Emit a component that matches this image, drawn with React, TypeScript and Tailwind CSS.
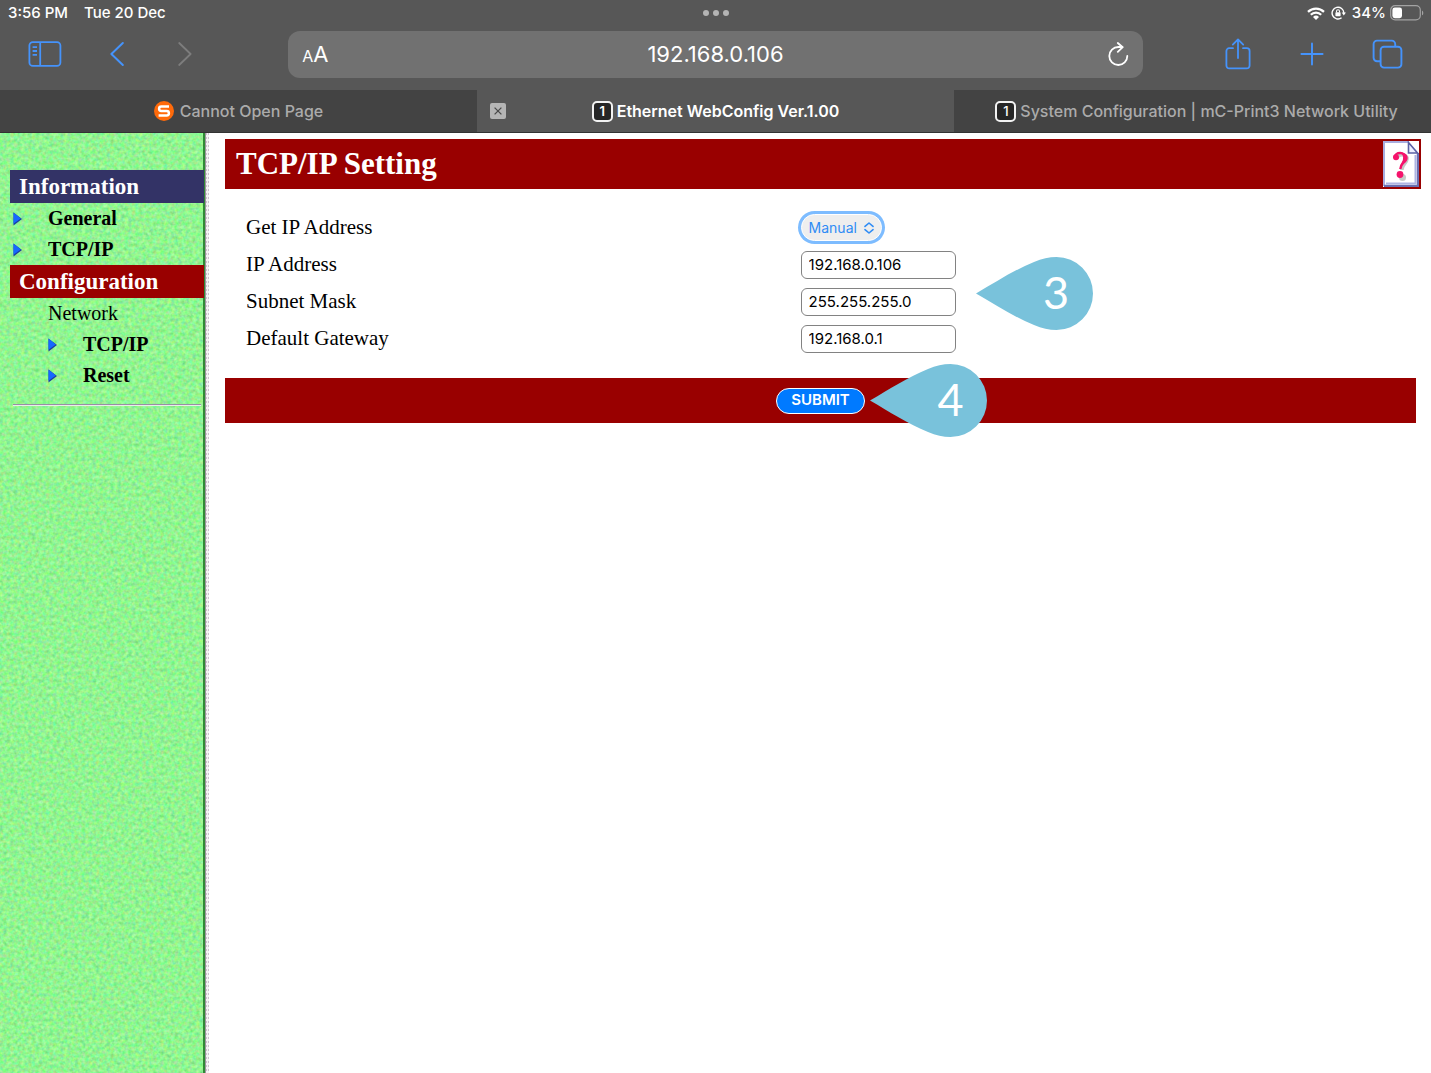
import type { ReactNode } from 'react';

function StatusBar() {
  return (
    <div className="relative flex h-[27px] items-center justify-between pl-2 pr-[7px] text-[15px] font-medium text-white">
      <div className="flex gap-4">
        <span>3:56 PM</span>
        <span>Tue 20 Dec</span>
      </div>
      <div className="absolute inset-x-0 top-2.5 flex justify-center gap-1">
        <span className="size-1.5 rounded-full bg-[#b4b4b4]" />
        <span className="size-1.5 rounded-full bg-[#b4b4b4]" />
        <span className="size-1.5 rounded-full bg-[#b4b4b4]" />
      </div>
      <div className="flex items-center pb-px">
        <svg className="mr-1.5" width="18" height="13" viewBox="0 0 18 13" fill="none" stroke="#fff" strokeWidth="2.2">
          <path d="M1 4.9a11.3 11.3 0 0 1 16 0" />
          <path d="M3.8 7.8a7.3 7.3 0 0 1 10.4 0" />
          <path d="M6 9.9a4.3 4.3 0 0 1 6 0L9 13z" fill="#fff" stroke="none" />
        </svg>
        <svg className="mr-1.5" width="15" height="14" viewBox="0 0 15 14" fill="none" stroke="#fff" strokeWidth="1.4">
          <path d="M10.6 11.8A5.9 5.9 0 1 1 12.9 7" />
          <path d="M10.7 6.4h4.2l-2.1 3z" fill="#fff" stroke="none" />
          <rect x="4.4" y="6.2" width="5.2" height="4" rx=".7" fill="#fff" stroke="none" />
          <path d="M5.5 6.4V5.2a1.5 1.5 0 0 1 3 0v1.2" strokeWidth="1.1" />
        </svg>
        <span className="mr-1">34%</span>
        <svg width="34" height="16" viewBox="0 0 34 16" fill="none">
          <rect x=".7" y=".7" width="29.6" height="14.2" rx="4.4" stroke="#a3a3a3" strokeWidth="1.2" />
          <rect x="2.4" y="2.6" width="9.6" height="10.6" rx="2.4" fill="#fff" />
          <path d="M32 5.4c1.7.7 1.7 4.2 0 4.9z" fill="#a3a3a3" />
        </svg>
      </div>
    </div>
  );
}

function Toolbar() {
  return (
    <div className="grid h-[63px] grid-cols-[1fr_3fr_1fr] pb-2 text-[#4593fb]">
      <div className="flex items-center pb-px pl-7">
        <button aria-label="Show sidebar" className="mr-12">
          <svg width="34" height="26" viewBox="0 0 34 26" fill="none" stroke="currentColor" strokeWidth="1.8">
            <rect x="1.4" y="1.2" width="31" height="23.6" rx="3.4" />
            <path d="M12.2 1.2v23.6M4.6 6.2H9M4.6 10H9M4.6 13.8H9" />
          </svg>
        </button>
        <button aria-label="Back" className="mr-[54px]">
          <svg width="14" height="26" viewBox="0 0 14 26" fill="none" stroke="currentColor" strokeWidth="2" strokeLinecap="round" strokeLinejoin="round">
            <path d="M12.8 2 1.4 13l11.4 11" />
          </svg>
        </button>
        <button aria-label="Forward" className="text-[#7d7d7d]">
          <svg width="14" height="26" viewBox="0 0 14 26" fill="none" stroke="currentColor" strokeWidth="1.8" strokeLinecap="round" strokeLinejoin="round">
            <path d="m1.2 2 11.4 11L1.2 24" />
          </svg>
        </button>
      </div>
      <div className="mx-0.5 my-1 flex items-center justify-between rounded-xl bg-[#717171] px-3.5 text-white">
        <button aria-label="Page settings" className="flex w-8 items-baseline pt-0.5">
          <span className="text-[16px]">A</span>
          <span className="text-[22px] leading-none">A</span>
        </button>
        <span className="text-[22px]">192.168.0.106</span>
        <button aria-label="Reload" className="flex w-8 justify-end">
          <svg width="21" height="25" viewBox="0 0 21 25" fill="none" stroke="currentColor" strokeWidth="1.8" strokeLinecap="round" strokeLinejoin="round">
            <path d="M19.3 14a9 9 0 1 1-9-9h4" />
            <path d="m9.8 1 4.900 4.200-4.900 4.600" />
          </svg>
        </button>
      </div>
      <div className="flex items-center justify-end pb-0.5 pr-7">
        <button aria-label="Share" className="mr-12">
          <svg width="27" height="32" viewBox="0 0 27 32" fill="none" stroke="currentColor" strokeWidth="1.8" strokeLinecap="round" strokeLinejoin="round">
            <path d="M8 10.2H4.2A2.8 2.8 0 0 0 1.4 13v14.6a2.8 2.8 0 0 0 2.8 2.8h17.6a2.8 2.8 0 0 0 2.8-2.8V13a2.8 2.8 0 0 0-2.8-2.8H18" />
            <path d="M13 20V1.6M7.8 6.6 13 1.4l5.2 5.2" />
          </svg>
        </button>
        <button aria-label="New tab" className="mr-12">
          <svg width="24" height="24" viewBox="0 0 24 24" fill="none" stroke="currentColor" strokeWidth="1.9" strokeLinecap="round">
            <path d="M12 1.4v21.2M1.4 12h21.2" />
          </svg>
        </button>
        <button aria-label="Show tabs">
          <svg width="31" height="30" viewBox="0 0 31 30" fill="none" stroke="currentColor" strokeWidth="1.9">
            <path d="M8.6 22.2H5A3.4 3.4 0 0 1 1.6 18.8V5A3.4 3.4 0 0 1 5 1.6h14.8A3.4 3.4 0 0 1 23.2 5v2.8" />
            <rect x="8.6" y="7.8" width="20.8" height="20.8" rx="3.4" />
          </svg>
        </button>
      </div>
    </div>
  );
}

function OneBadge() {
  return (
    <span className="flex size-[21px] items-center justify-center rounded-[5px] border-2 border-[#f2f2f2] bg-[#262626] text-[13px] leading-none text-white">
      1
    </span>
  );
}

function Tabs() {
  return (
    <div className="grid h-[43px] grid-cols-3 border-b border-[#333] bg-[#434343] text-[16px] font-medium text-[#ababab]">
      <button className="flex items-center justify-center gap-1.5">
        <svg width="20" height="20" viewBox="0 0 20 20">
          <circle cx="10" cy="10" r="10" fill="#ff6a0a" />
          <path d="M15 5.6H7.3a2.2 2.2 0 0 0 0 4.4h5.4a2.2 2.2 0 0 1 0 4.4H4.6" fill="none" stroke="#fff" strokeWidth="2.5" />
        </svg>
        Cannot Open Page
      </button>
      <div className="relative flex items-center justify-center bg-[#575757] text-white">
        <button aria-label="Close tab" className="absolute left-[13px] flex size-4 items-center justify-center rounded-[2px] bg-[#b5b5b5] text-[#4a4a4a]">
          <svg width="8" height="8" viewBox="0 0 8 8" stroke="currentColor" strokeWidth="1.3">
            <path d="m.6.6 6.8 6.8M7.4.6.6 7.4" />
          </svg>
        </button>
        <button className="flex items-center gap-1 font-semibold">
          <OneBadge />
          Ethernet WebConfig Ver.1.00
        </button>
      </div>
      <button className="flex items-center justify-center gap-1 whitespace-nowrap pl-2">
        <OneBadge />
        System Configuration | mC-Print3 Network Utility
      </button>
    </div>
  );
}

function Arrow() {
  return (
    <svg width="9" height="14" viewBox="0 0 9 14">
      <path d="M.5.5 9 7 .5 13.5z" fill="#1c3d9c" />
      <path d="M.5.5 7.8 6.4.5 11.8z" fill="#1668ff" />
    </svg>
  );
}

function NavLink({ children, nested }: { children: ReactNode; nested?: boolean }) {
  return (
    <a href="#" className={nested ? 'flex h-[31px] items-center pl-12 font-bold' : 'flex h-[31px] items-center pl-[13px] font-bold'}>
      <span className="w-[35px]">
        <Arrow />
      </span>
      {children}
    </a>
  );
}

function Sidebar() {
  return (
    <nav className="relative w-[209px] shrink-0 pr-1 pt-[37px] text-[20px] leading-[31px] text-black">
      <svg className="absolute inset-0 h-full w-full" aria-hidden="true">
        <defs>
          <filter id="paper" x="0" y="0" width="100%" height="100%" colorInterpolationFilters="sRGB">
            <feTurbulence type="fractalNoise" baseFrequency="0.28" numOctaves="2" seed="4" />
            <feColorMatrix values="0.42 0 0 0 0.36  0 0.3 0 0 0.81  0 0 0.34 0 0.4  0 0 0 0 1" />
          </filter>
          <pattern id="dots" width="4" height="4" patternUnits="userSpaceOnUse">
            <rect width="4" height="4" fill="#f4f2f4" />
            <rect width="3" height="2" fill="#cdc4cd" />
          </pattern>
        </defs>
        <rect width="204" height="100%" fill="#92f992" />
        <rect width="204" height="100%" filter="url(#paper)" />
        <rect x="203" width="2" height="100%" fill="#2f8a35" />
        <rect x="205" width="1" height="100%" fill="#9a949a" />
        <rect x="206" width="3" height="100%" fill="url(#dots)" />
      </svg>
      <div className="relative">
        <h2 className="ml-2.5 mr-px h-[33px] bg-[#333366] pl-[9px] text-[23px] leading-[34px] font-bold text-white">Information</h2>
        <NavLink>General</NavLink>
        <NavLink>TCP/IP</NavLink>
        <h2 className="ml-2.5 mr-px h-[33px] bg-[#990000] pl-[9px] text-[23px] leading-[34px] font-bold text-white">Configuration</h2>
        <div className="pl-12">Network</div>
        <NavLink nested>TCP/IP</NavLink>
        <NavLink nested>Reset</NavLink>
        <hr className="ml-[13px] mr-1 mt-[13px] h-0.5 border-0 border-t border-b border-t-[#9a8fa5] border-b-[#e9eee9]" />
      </div>
    </nav>
  );
}

function Callout({ label }: { label: string }) {
  return (
    <div className="relative h-[73px] w-[117px]">
      <svg className="absolute inset-0" width="117" height="73" viewBox="0 0 117 73">
        <path d="M0 36.5C20 25 38 13 58 5 66 1.5 73 0 80.500 0a36.500 36.500 0 0 1 0 73C73 73 66 71.500 58 68 38 60 20 48 0 36.500z" fill="#79c2db" />
      </svg>
      <span className="relative flex h-full items-center justify-center pb-0.5 pl-11 font-['Lato',sans-serif] text-[45px] leading-none text-white">
        {label}
      </span>
    </div>
  );
}

const fields = [
  { id: 'ip', label: 'IP Address', value: '192.168.0.106' },
  { id: 'mask', label: 'Subnet Mask', value: '255.255.255.0' },
  { id: 'gateway', label: 'Default Gateway', value: '192.168.0.1' },
];

function SettingsForm() {
  return (
    <form className="mr-[5px]" onSubmit={(e) => e.preventDefault()}>
      <div className="grid grid-cols-[474fr_526fr] auto-rows-[37px] items-center pb-[21px] pl-[21px] pt-5 text-[21px]">
        <label htmlFor="mode">Get IP Address</label>
        <div className="relative flex w-fit items-center font-['Inter',sans-serif] text-[14px] text-[#2f8cf5]">
          <select id="mode" defaultValue="Manual" className="h-[27px] w-[81px] appearance-none rounded-full border border-white bg-[#eeeeee] pl-[7px] ring-3 ring-[#7dbcff] outline-none">
            <option>Manual</option>
            <option>DHCP</option>
          </select>
          <svg className="pointer-events-none absolute right-2" width="10" height="12" viewBox="0 0 10 12" fill="none" stroke="currentColor" strokeWidth="1.6" strokeLinecap="round" strokeLinejoin="round">
            <path d="M1 4.4 5 1l4 3.4M1 7.6 5 11l4-3.4" />
          </svg>
        </div>
        {fields.map((f) => (
          <div key={f.id} className="col-span-2 grid grid-cols-subgrid items-center">
            <label htmlFor={f.id}>{f.label}</label>
            <div className="relative flex w-fit items-center">
              <input
                id={f.id}
                defaultValue={f.value}
                className="h-7 w-[155px] rounded-md border border-[#828282] bg-white px-[7px] font-['Inter',sans-serif] text-[15px] text-black outline-none"
              />
              {f.id === 'mask' && (
                <div className="absolute bottom-[-14px] left-full pl-5">
                  <Callout label="3" />
                </div>
              )}
            </div>
          </div>
        ))}
      </div>
      <div className="flex h-[45px] items-center justify-center bg-[#990000]">
        <div className="relative flex items-center">
          <button type="submit" className="h-[26px] w-[89px] rounded-full border border-white bg-[#007aff] font-['Inter',sans-serif] text-[15px] font-semibold text-white">
            SUBMIT
          </button>
          <div className="absolute left-full pl-[5px]">
            <Callout label="4" />
          </div>
        </div>
      </div>
    </form>
  );
}

function HelpIcon() {
  return (
    <svg width="36" height="46" viewBox="0 0 36 46">
      <path d="M0 0h36v46H0z" fill="#fff" />
      <path d="M1 45V1h25" fill="none" stroke="#a9addf" strokeWidth="2" />
      <path d="M1 45h34V12" fill="none" stroke="#6a6fb0" strokeWidth="2.4" />
      <path d="M3 42.5h29.500V14" fill="none" stroke="#aeb3e2" strokeWidth="2" />
      <path d="M25.500 1.500v10.500h9z" fill="#eef0ff" stroke="#5b60a4" strokeWidth="1.600" />
      <path d="M14 18c0-6 10.500-5.500 10 0-.3 4.500-5 5-5.200 11" fill="none" stroke="#c6cac6" strokeWidth="3.600" />
      <circle cx="19.500" cy="36.500" r="3.500" fill="#c6cac6" />
      <path d="M11.500 16.500c0-6 11.500-6 11 .5-.4 4.600-4.900 5-5.200 11" fill="none" stroke="#f5146c" strokeWidth="2.400" />
      <path d="M18 11.500c8 .2 9 8 2.500 11.500-1.800 1.200-2.600 3-3 5 -.6-2.500.3-4.500 1.400-6.400 1.900-3.500 1.600-7.500-.9-10.100z" fill="#f5146c" />
      <circle cx="13" cy="16.200" r="3" fill="#f5146c" />
      <circle cx="17" cy="33.500" r="3.400" fill="#f5146c" />
    </svg>
  );
}

export default function App() {
  return (
    <div className="flex min-h-screen flex-col bg-white font-['Inter',sans-serif]">
      <header className="bg-[#575757]">
        <StatusBar />
        <Toolbar />
        <Tabs />
      </header>
      <div className="flex grow font-['Liberation_Serif',serif] text-black">
        <Sidebar />
        <main className="grow pl-4 pr-2.5 pt-1.5">
          <div className="flex h-[50px] items-center justify-between bg-[#990000] pl-[11px] pr-0.5 text-white">
            <h1 className="text-[31px] leading-10 font-bold">TCP/IP Setting</h1>
            <a href="#" aria-label="Help">
              <HelpIcon />
            </a>
          </div>
          <SettingsForm />
        </main>
      </div>
    </div>
  );
}
